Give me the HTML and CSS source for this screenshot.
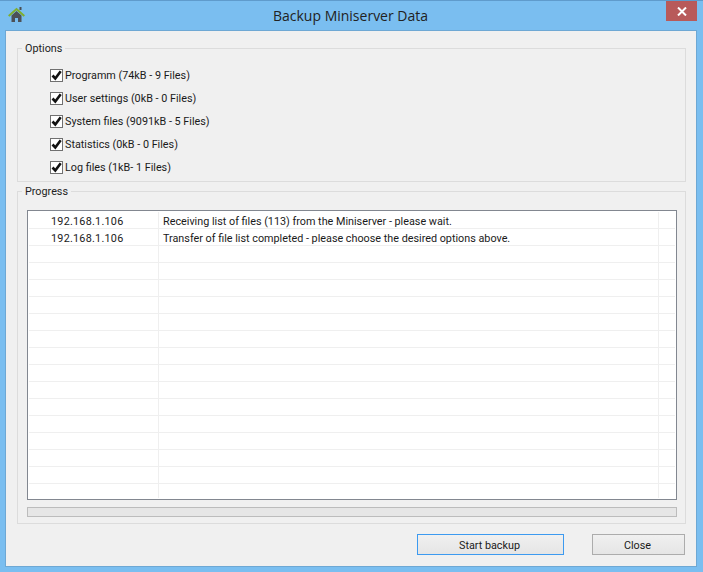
FILE: index.html
```html
<!DOCTYPE html>
<html lang="en">
<head>
<meta charset="utf-8">
<title>Backup Miniserver Data</title>
<link rel="stylesheet" href="styles.css">
</head>
<body>
<div class="window">
  <header class="titlebar">
    <svg class="home" width="17" height="16" viewBox="0 0 17 16">
      <rect x="11.500" y="0" width="2" height="3" fill="#4a4f55"/>
      <path d="M3.500 8.500 8.500 4l5 4.500V15H10v-4H7v4H3.500z" fill="#4c5157"/>
      <path d="M.7 9 8.500 2l7.800 7" fill="none" stroke="#7fae2e" stroke-width="2"/>
    </svg>
    <h1 class="title">Backup Miniserver Data</h1>
    <button class="close-x" aria-label="Close">
      <svg width="10" height="9" viewBox="0 0 10 9"><path d="M1 .5 9 8.500M9 .5 1 8.500" stroke="#fff" stroke-width="2"/></svg>
    </button>
  </header>
  <main class="panel">
    <fieldset class="group options">
      <legend>Options</legend>
      <label class="check"><span class="box"><svg width="11" height="11" viewBox="0 0 11 11"><path d="M1.500 5.500 4.300 8.500 9.700 1.200" fill="none" stroke="#111" stroke-width="2.600"/></svg></span>Programm (74kB - 9 Files)</label>
      <label class="check"><span class="box"><svg width="11" height="11" viewBox="0 0 11 11"><path d="M1.500 5.500 4.300 8.500 9.700 1.200" fill="none" stroke="#111" stroke-width="2.600"/></svg></span>User settings (0kB - 0 Files)</label>
      <label class="check"><span class="box"><svg width="11" height="11" viewBox="0 0 11 11"><path d="M1.500 5.500 4.300 8.500 9.700 1.200" fill="none" stroke="#111" stroke-width="2.600"/></svg></span>System files (9091kB - 5 Files)</label>
      <label class="check"><span class="box"><svg width="11" height="11" viewBox="0 0 11 11"><path d="M1.500 5.500 4.300 8.500 9.700 1.200" fill="none" stroke="#111" stroke-width="2.600"/></svg></span>Statistics (0kB - 0 Files)</label>
      <label class="check"><span class="box"><svg width="11" height="11" viewBox="0 0 11 11"><path d="M1.500 5.500 4.300 8.500 9.700 1.200" fill="none" stroke="#111" stroke-width="2.600"/></svg></span>Log files (1kB- 1 Files)</label>
    </fieldset>
    <fieldset class="group progress">
      <legend>Progress</legend>
      <div class="table">
        <div class="row"><div class="c1">192.168.1.106</div><div class="c2">Receiving list of files (113) from the Miniserver - please wait.</div><div class="c3"></div></div>
        <div class="row"><div class="c1">192.168.1.106</div><div class="c2">Transfer of file list completed - please choose the desired options above.</div><div class="c3"></div></div>
        <div class="row"><div class="c1"></div><div class="c2"></div><div class="c3"></div></div>
        <div class="row"><div class="c1"></div><div class="c2"></div><div class="c3"></div></div>
        <div class="row"><div class="c1"></div><div class="c2"></div><div class="c3"></div></div>
        <div class="row"><div class="c1"></div><div class="c2"></div><div class="c3"></div></div>
        <div class="row"><div class="c1"></div><div class="c2"></div><div class="c3"></div></div>
        <div class="row"><div class="c1"></div><div class="c2"></div><div class="c3"></div></div>
        <div class="row"><div class="c1"></div><div class="c2"></div><div class="c3"></div></div>
        <div class="row"><div class="c1"></div><div class="c2"></div><div class="c3"></div></div>
        <div class="row"><div class="c1"></div><div class="c2"></div><div class="c3"></div></div>
        <div class="row"><div class="c1"></div><div class="c2"></div><div class="c3"></div></div>
        <div class="row"><div class="c1"></div><div class="c2"></div><div class="c3"></div></div>
        <div class="row"><div class="c1"></div><div class="c2"></div><div class="c3"></div></div>
        <div class="row"><div class="c1"></div><div class="c2"></div><div class="c3"></div></div>
        <div class="row"><div class="c1"></div><div class="c2"></div><div class="c3"></div></div>
        <div class="row last"><div class="c1"></div><div class="c2"></div><div class="c3"></div></div>
      </div>
      <div class="bar"></div>
    </fieldset>
    <div class="actions">
      <button class="btn primary">Start backup</button>
      <button class="btn secondary">Close</button>
    </div>
  </main>
</div>
</body>
</html>
```
FILE: styles.css
```css
* { box-sizing: border-box; }
html, body { margin: 0; height: 100%; }
body {
  background: #7abef0;
  font-family: Roboto, "Open Sans", sans-serif;
  font-size: 10.8px;
  color: #1a1a1a;
  overflow: hidden;
}
.window {
  height: 572px;
  display: flex;
  flex-direction: column;
  border-top: 1px solid #5f9bcc;
}
.titlebar {
  height: 29px;
  flex: none;
  display: flex;
  align-items: flex-start;
  padding: 0 6px 0 8px;
}
.home { margin-top: 6px; flex: none; }
.title {
  flex: 1;
  margin: 6px 0 0;
  padding-left: 10px;
  text-align: center;
  font-family: "Open Sans", sans-serif;
  font-size: 14px;
  line-height: 18px;
  font-weight: 400;
  color: #222;
}
.close-x {
  width: 31px;
  height: 20px;
  border: 0;
  padding: 0;
  background: #b85a5a;
  display: flex;
  align-items: center;
  justify-content: center;
  flex: none;
}
.panel {
  flex: none;
  height: 537px;
  margin: 0 6px 0 5px;
  background: #f0f0f0;
  border: 1px solid #6ea8d4;
  padding: 9px 10px 0 11px;
  display: flex;
  flex-direction: column;
}
.group {
  margin: 0;
  padding: 0;
  border: 1px solid #dcdcdc;
  min-width: 0;
}
.group legend {
  margin-left: 4px;
  padding: 1px 3px 0;
  font-size: 10.8px;
  line-height: 16px;
  color: #222;
}
.options {
  height: 142px;
  padding-top: 7px;
  display: flex;
  flex-direction: column;
}
.check {
  height: 23px;
  margin-left: 32px;
  display: flex;
  align-items: center;
  gap: 2px;
  line-height: 16px;
}
.box {
  width: 13px;
  height: 13px;
  border: 1px solid #707070;
  background: #fff;
  display: flex;
  align-items: center;
  justify-content: center;
  flex: none;
}
.progress {
  height: 341px;
  margin-top: 1px;
  padding-top: 10px;
}
.table {
  height: 290px;
  margin: 0 8px 0 9px;
  background: #fff;
  border: 1px solid #828790;
  padding: 1px 1px 0 1px;
}
.row {
  height: 17px;
  display: grid;
  grid-template-columns: 130px 500px 16px;
  border-bottom: 1px solid #efefef;
  line-height: 17px;
}
.row.last { height: 14px; border-bottom: 0; }
.c1 {
  padding: 1px 0 0 22px;
  border-right: 1px solid #efefef;
  letter-spacing: .25px;
}
.c2 {
  padding: 1px 0 0 4px;
  border-right: 1px solid #efefef;
  white-space: nowrap;
}
.bar {
  height: 10px;
  margin: 7px 8px 0 9px;
  background: #e6e6e6;
  border: 1px solid #bcbcbc;
}
.actions {
  display: flex;
  justify-content: flex-end;
  gap: 28px;
  margin-top: 10px;
  padding-right: 1px;
}
.btn {
  appearance: none;
  height: 21px;
  font: inherit;
  color: #1a1a1a;
  background: linear-gradient(#f0f0f0, #e5e5e5);
  padding: 2px 2px 0 0;
}
.primary { width: 147px; border: 1px solid #3c9af0; }
.secondary { width: 93px; border: 1px solid #acacac; }
```
